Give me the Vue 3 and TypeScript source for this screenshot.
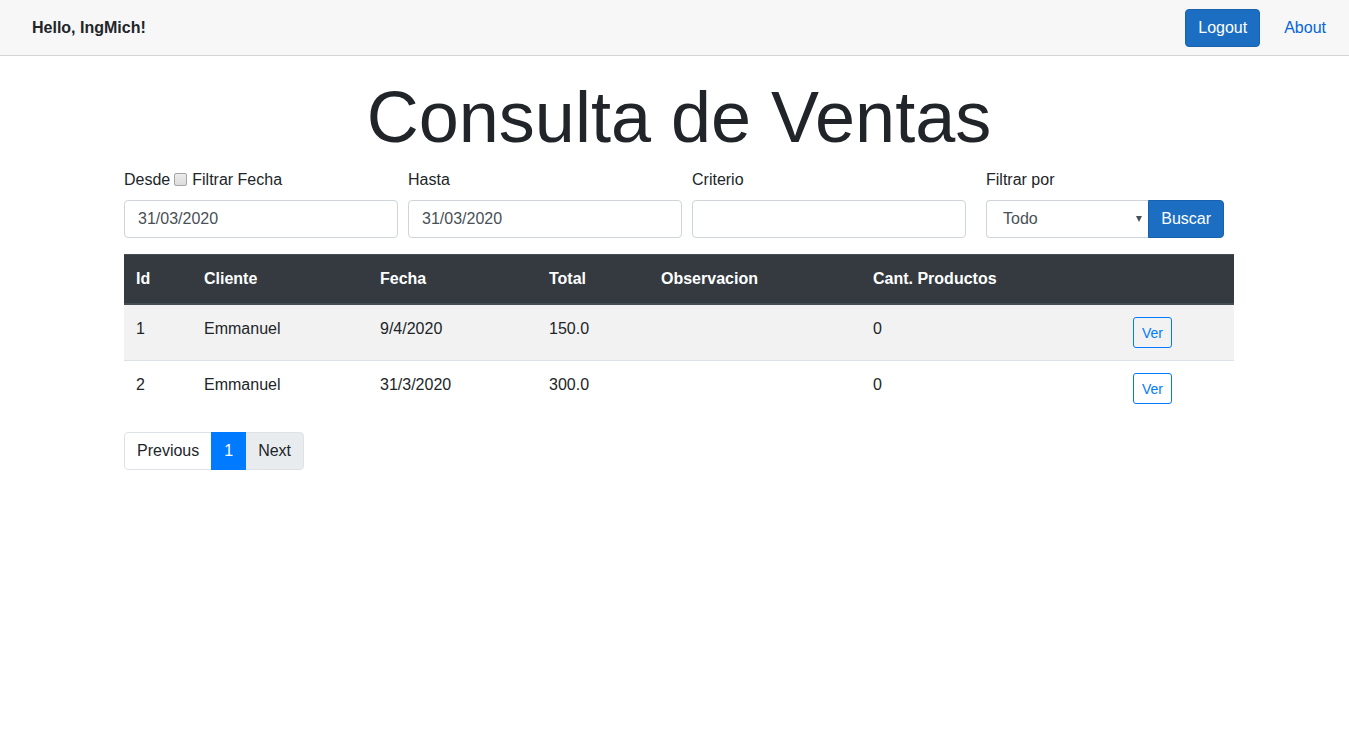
<script setup lang="ts">
import { ref } from 'vue'

interface Venta {
  id: number
  cliente: string
  fecha: string
  total: string
  observacion: string
  productos: number
}

const filtrarFecha = ref(false)
const desde = ref('31/03/2020')
const hasta = ref('31/03/2020')
const criterio = ref('')
const filtro = ref('Todo')

const ventas: Venta[] = [
  { id: 1, cliente: 'Emmanuel', fecha: '9/4/2020', total: '150.0', observacion: '', productos: 0 },
  { id: 2, cliente: 'Emmanuel', fecha: '31/3/2020', total: '300.0', observacion: '', productos: 0 },
]
</script>

<template>
  <div class="page">
    <header class="top-bar">
      <strong class="greeting">Hello, IngMich!</strong>
      <nav class="top-nav">
        <button type="button" class="btn btn-primary">Logout</button>
        <a href="#about" class="about">About</a>
      </nav>
    </header>

    <main class="content">
      <div class="container">
        <h1 class="title">Consulta de Ventas</h1>

        <form class="filters" @submit.prevent>
          <div class="field">
            <div class="labels">
              <label for="desde">Desde</label>
              <input id="filtrar-fecha" v-model="filtrarFecha" type="checkbox" class="check" />
              <label for="filtrar-fecha">Filtrar Fecha</label>
            </div>
            <input id="desde" v-model="desde" type="text" class="control" />
          </div>
          <div class="field">
            <div class="labels"><label for="hasta">Hasta</label></div>
            <input id="hasta" v-model="hasta" type="text" class="control" />
          </div>
          <div class="field">
            <div class="labels"><label for="criterio">Criterio</label></div>
            <input id="criterio" v-model="criterio" type="text" class="control" />
          </div>
          <div class="field field-search">
            <div class="labels"><label for="filtro">Filtrar por</label></div>
            <div class="group">
              <div class="select-wrap">
                <select id="filtro" v-model="filtro" class="control select">
                  <option>Todo</option>
                </select>
                <svg class="arrow" viewBox="0 0 6 6" aria-hidden="true"><path d="M0 0H6L3 6Z" fill="#495057" /></svg>
              </div>
              <button type="submit" class="btn btn-primary btn-search">Buscar</button>
            </div>
          </div>
        </form>

        <table class="table">
          <colgroup>
            <col class="c-id" />
            <col class="c-cliente" />
            <col class="c-fecha" />
            <col class="c-total" />
            <col class="c-obs" />
            <col class="c-cant" />
            <col class="c-ver" />
          </colgroup>
          <thead>
            <tr>
              <th>Id</th>
              <th>Cliente</th>
              <th>Fecha</th>
              <th>Total</th>
              <th>Observacion</th>
              <th>Cant. Productos</th>
              <th></th>
            </tr>
          </thead>
          <tbody>
            <tr v-for="v in ventas" :key="v.id">
              <td>{{ v.id }}</td>
              <td>{{ v.cliente }}</td>
              <td>{{ v.fecha }}</td>
              <td>{{ v.total }}</td>
              <td>{{ v.observacion }}</td>
              <td>{{ v.productos }}</td>
              <td><button type="button" class="btn btn-outline">Ver</button></td>
            </tr>
          </tbody>
        </table>

        <nav class="pagination" aria-label="Paginas">
          <button type="button" class="page-link">Previous</button>
          <button type="button" class="page-link active" aria-current="page">1</button>
          <button type="button" class="page-link muted">Next</button>
        </nav>
      </div>
    </main>
  </div>
</template>

<style>
body {
  margin: 0;
  background: #fff;
}
</style>

<style scoped>
.page,
.page *,
.page *::before {
  box-sizing: border-box;
}
.page {
  font: 16px/24px "Liberation Sans", Arial, sans-serif;
  color: #212529;
}
button,
input,
select {
  font: inherit;
  margin: 0;
}
.top-bar {
  display: flex;
  align-items: center;
  justify-content: space-between;
  height: 56px;
  padding: 0 23px 0 32px;
  background: #f7f7f7;
  border-bottom: 1px solid #d6d5d5;
}
.top-nav {
  display: flex;
  align-items: center;
  gap: 24px;
}
.about {
  color: #0366d6;
  text-decoration: none;
}
.btn {
  height: 38px;
  padding: 0 12px;
  border: 1px solid;
  border-radius: 4px;
  cursor: pointer;
}
.btn-primary {
  color: #fff;
  background: #1b6ec2;
  border-color: #1861ac;
}
.btn-outline {
  display: block;
  height: 31px;
  padding: 0 8px;
  font-size: 14px;
  color: #007bff;
  background: transparent;
  border-color: #007bff;
  border-radius: 3px;
}
.content {
  padding-left: 9px;
}
.container {
  max-width: 1110px;
  margin: 0 auto;
  padding-top: 18px;
}
.title {
  margin: 0 0 8px;
  font-size: 72px;
  line-height: 86px;
  font-weight: 400;
  text-align: center;
}
.filters {
  display: grid;
  grid-template-columns: 1fr 1fr 1fr 248px;
  gap: 10px;
  padding-right: 10px;
  margin-bottom: 16px;
}
.field {
  min-width: 0;
}
.field-search {
  padding-left: 10px;
}
.labels {
  display: flex;
  align-items: center;
  height: 24px;
  margin-bottom: 8px;
}
.check {
  appearance: none;
  width: 13px;
  height: 13px;
  margin: 0 5px 2px 4px;
  border: 1px solid #a6a6a6;
  border-radius: 2px;
  background: linear-gradient(#ebebeb, #dcdcdc);
}
.check:checked {
  background: #1b6ec2;
}
.control {
  display: block;
  width: 100%;
  height: 38px;
  padding: 0 13px;
  color: #495057;
  background: #fff;
  border: 1px solid #ced4da;
  border-radius: 4px;
}
.group {
  display: flex;
}
.select-wrap {
  position: relative;
  flex: 1;
}
.select {
  appearance: none;
  padding: 0 16px;
  border-right: 0;
  border-radius: 4px 0 0 4px;
}
.arrow {
  position: absolute;
  right: 6px;
  top: 16px;
  width: 6px;
  height: 6px;
  pointer-events: none;
}
.btn-search {
  border-radius: 0 4px 4px 0;
}
.table {
  width: 100%;
  table-layout: fixed;
  border-collapse: collapse;
  margin-bottom: 16px;
}
.c-id { width: 68px; }
.c-cliente { width: 176px; }
.c-fecha { width: 169px; }
.c-total { width: 112px; }
.c-obs { width: 212px; }
.c-cant { width: 260px; }
.c-ver { width: 113px; }
.table th {
  padding: 12px;
  text-align: left;
  color: #fff;
  background: #343a40;
  border-top: 1px solid #454d55;
  border-bottom: 2px solid #454d55;
}
.table td {
  padding: 12px;
  vertical-align: top;
  border-top: 1px solid #dee2e6;
}
.table tbody tr:nth-child(odd) {
  background: #f2f2f2;
}
.pagination {
  display: flex;
}
.page-link {
  height: 38px;
  padding: 0 12px;
  color: #212529;
  background: #fff;
  border: 1px solid #dee2e6;
  cursor: pointer;
}
.page-link + .page-link {
  margin-left: -1px;
}
.page-link:first-child {
  border-radius: 4px 0 0 4px;
}
.page-link:last-child {
  border-radius: 0 4px 4px 0;
}
.page-link.active {
  position: relative;
  color: #fff;
  background: #007bff;
  border-color: #007bff;
}
.page-link.muted {
  background: #e9ecef;
}
</style>
